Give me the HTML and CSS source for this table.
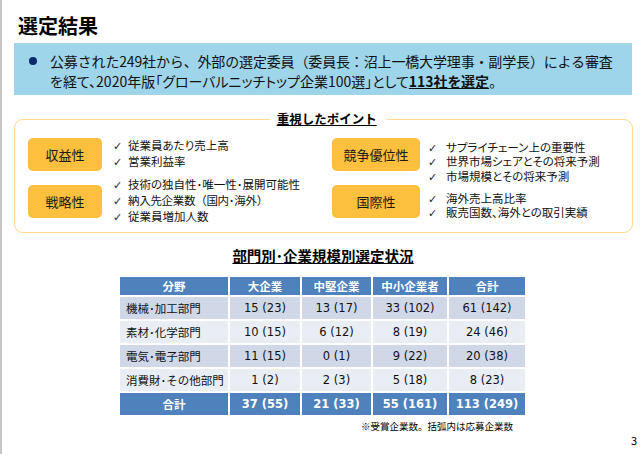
FILE: index.html
```html
<!DOCTYPE html>
<html lang="ja">
<head>
<meta charset="utf-8">
<link rel="stylesheet" href="styles.css">
</head>
<body>
<div class="page">
  <h1 class="title">選定結果</h1>
  <div class="lead">
    <span class="bullet"></span>
    <p class="lead-text"><span class="line">公募された249社から、外部の選定委員（委員長：沼上一橋大学理事・副学長）による審査</span><span class="line line-tight">を経て、2020年版「グローバルニッチトップ企業100選」として<strong class="em">113社を選定</strong>。</span></p>
  </div>
  <section class="points">
    <h2 class="points-title">重視したポイント</h2>
    <div class="points-grid">
      <div class="group">
        <div class="pill pill-left">収益性</div>
        <ul class="checks">
          <li>従業員あたり売上高</li>
          <li>営業利益率</li>
        </ul>
      </div>
      <div class="group">
        <div class="pill pill-right">競争優位性</div>
        <ul class="checks checks-right checks-a">
          <li>サプライチェーン上の重要性</li>
          <li>世界市場シェアとその将来予測</li>
          <li>市場規模とその将来予測</li>
        </ul>
      </div>
      <div class="group">
        <div class="pill pill-left">戦略性</div>
        <ul class="checks">
          <li>技術の独自性･唯一性･展開可能性</li>
          <li class="wide">納入先企業数（国内･海外）</li>
          <li>従業員増加人数</li>
        </ul>
      </div>
      <div class="group">
        <div class="pill pill-right">国際性</div>
        <ul class="checks checks-right checks-b">
          <li>海外売上高比率</li>
          <li>販売国数、海外との取引実績</li>
        </ul>
      </div>
    </div>
  </section>
  <h2 class="table-title">部門別･企業規模別選定状況</h2>
  <table class="stats">
    <colgroup>
      <col class="c1"><col class="c2"><col class="c3"><col class="c4"><col class="c5">
    </colgroup>
    <thead>
      <tr><th>分野</th><th>大企業</th><th>中堅企業</th><th>中小企業者</th><th>合計</th></tr>
    </thead>
    <tbody>
      <tr class="odd"><td class="name">機械･加工部門</td><td>15 (23)</td><td>13 (17)</td><td>33 (102)</td><td>61 (142)</td></tr>
      <tr class="even"><td class="name">素材･化学部門</td><td>10 (15)</td><td>6 (12)</td><td>8 (19)</td><td>24 (46)</td></tr>
      <tr class="odd"><td class="name">電気･電子部門</td><td>11 (15)</td><td>0 (1)</td><td>9 (22)</td><td>20 (38)</td></tr>
      <tr class="even"><td class="name">消費財･その他部門</td><td>1 (2)</td><td>2 (3)</td><td>5 (18)</td><td>8 (23)</td></tr>
      <tr class="total"><td>合計</td><td>37 (55)</td><td>21 (33)</td><td>55 (161)</td><td>113 (249)</td></tr>
    </tbody>
  </table>
  <p class="note">※受賞企業数。括弧内は応募企業数</p>
  <p class="pageno">3</p>
</div>
</body>
</html>
```

FILE: styles.css
```css
* { box-sizing: border-box; }
html, body { margin: 0; padding: 0; background: #fff; }
body {
  font-family: "DejaVu Sans", "Noto Sans CJK JP", sans-serif;
  color: #000;
}
.page {
  width: 644px;
  height: 454px;
  border-left: 2px solid #c6c6c6;
  padding-top: 14px;
  overflow: hidden;
}
.title {
  margin: 0 0 5px 16px;
  font-family: "Noto Sans CJK JP", sans-serif;
  font-size: 20px;
  line-height: 24px;
  font-weight: 700;
}
.lead {
  margin: 0 12px;
  height: 52px;
  background: #9ed5ea;
  display: flex;
  align-items: flex-start;
  padding: 8px 0 4px 15px;
}
.bullet {
  flex: none;
  width: 8px;
  height: 8px;
  border-radius: 50%;
  background: #0a2a6e;
  margin-top: 6px;
  margin-right: 13px;
}
.lead-text {
  margin: 0;
  font-family: "Noto Sans CJK JP", sans-serif;
  font-size: 14px;
  line-height: 20px;
  color: #111;
  white-space: nowrap;
}
.line { display: block; letter-spacing: -0.15px; }
.line-tight { font-feature-settings: "palt"; letter-spacing: 0; }
.em {
  font-weight: 700;
  text-decoration: underline;
}
.points {
  position: relative;
  margin: 24px 11px 0 12px;
  border: 1.5px solid #ffd98c;
  border-radius: 9px;
  padding: 17.5px 0 14.5px 13px;
}
.points-title {
  position: absolute;
  top: -10px;
  left: 50%;
  transform: translateX(-46%);
  margin: 0;
  padding: 0 10px 0 7px;
  background: #fff;
  font-family: "Noto Sans CJK JP", sans-serif;
  font-size: 12.5px;
  line-height: 18px;
  font-weight: 700;
  text-decoration: underline;
  white-space: nowrap;
}
.points-grid {
  display: grid;
  grid-template-columns: 304px 1fr;
  row-gap: 14px;
}
.group {
  display: flex;
  align-items: center;
  height: 33px;
}
.pill {
  flex: none;
  height: 33px;
  border-radius: 5px;
  background: #fdbf3e;
  display: flex;
  align-items: center;
  justify-content: center;
  font-family: "Noto Sans CJK JP", sans-serif;
  font-size: 13px;
  color: #1a1a1a;
}
.pill-left { width: 74px; margin-right: 11px; }
.pill-right { width: 88px; margin-right: 8px; }
.checks {
  list-style: none;
  margin: 0;
  padding: 0;
  font-family: "Noto Sans CJK JP", sans-serif;
  font-feature-settings: "palt";
  font-size: 11.5px;
  line-height: 14px;
  color: #111;
  white-space: nowrap;
}
.checks li.wide { font-feature-settings: normal; letter-spacing: -0.3px; }
.checks li::before {
  content: "✓";
  font-family: "DejaVu Sans", sans-serif;
  font-size: 11px;
  display: inline-block;
  width: 15px;
  color: #1a2238;
  letter-spacing: 0;
}
.checks-right { line-height: 13.5px; }
.checks-right li::before { width: 18px; }
.checks-a { align-self: flex-start; margin-top: 3px; }
.checks-b { align-self: flex-start; margin-top: 7px; }
.table-title {
  margin: 14px 0 10px;
  text-align: center;
  font-family: "Noto Sans CJK JP", sans-serif;
  font-size: 14.5px;
  line-height: 18px;
  font-weight: 700;
  text-decoration: underline;
}
.stats {
  margin-left: 116px;
  width: 407px;
  border-collapse: collapse;
  table-layout: fixed;
  font-size: 11.5px;
}
.c1 { width: 110px; }
.c2 { width: 72px; }
.c3 { width: 71px; }
.c4 { width: 76px; }
.c5 { width: 78px; }
.stats th, .stats td {
  border: 2px solid #fff;
  padding: 0;
  text-align: center;
  font-weight: 400;
  line-height: 14px;
}
.stats th {
  height: 20px;
  background: #4f81bd;
  color: #fff;
  font-weight: 700;
  font-family: "Noto Sans CJK JP", sans-serif;
  font-size: 11.5px;
}
.stats td { height: 24px; color: #111; }
.stats td.name {
  text-align: left;
  padding-left: 6px;
  font-family: "Noto Sans CJK JP", sans-serif;
}
.odd td { background: #d0d8e8; }
.even td { background: #e9edf4; }
.total td {
  height: 24px;
  background: #4f81bd;
  color: #fff;
  font-weight: 700;
}
.total td:first-child { font-family: "Noto Sans CJK JP", sans-serif; }
.note {
  margin: 3px 0 0;
  padding-right: 131px;
  text-align: right;
  font-family: "Noto Sans CJK JP", sans-serif;
  font-size: 9.5px;
  line-height: 12px;
}
.pageno {
  margin: 2px 0 0;
  padding-right: 7px;
  text-align: right;
  font-family: "Noto Sans CJK JP", sans-serif;
  font-size: 11px;
  line-height: 12px;
}
```
